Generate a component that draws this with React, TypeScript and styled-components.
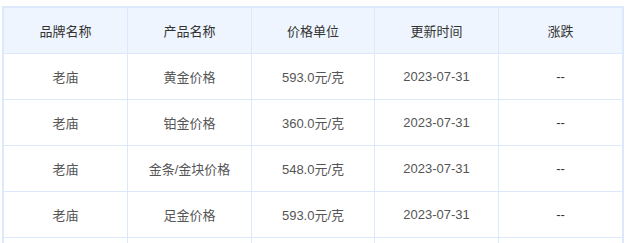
import styled, { createGlobalStyle } from 'styled-components';

const GlobalStyle = createGlobalStyle`
  body {
    margin: 0;
    background: #fff;
    font-family: 'Liberation Sans', 'Noto Sans CJK SC', sans-serif;
  }
`;

const PageLayout = styled.div`
  padding: 6px 0 0 2px;
`;

const PriceTable = styled.table`
  border-collapse: separate;
  border-spacing: 0;
  border: 2px solid #dce8fb;
  table-layout: fixed;
  width: 620px;
  font-size: 13px;
`;

const HeadCell = styled.th<{ $w: number }>`
  width: ${(p) => p.$w}px;
  height: 45px;
  padding: 0;
  background-color: #eef5fe;
  color: #333;
  font-weight: 400;
  text-align: center;
  border-right: 1px solid #dce8fb;
  border-bottom: 1px solid #dce8fb;

  &:last-child {
    border-right: none;
  }
`;

const Cell = styled.td<{ $dark?: boolean }>`
  height: 45px;
  padding: 0;
  color: ${(p) => (p.$dark ? '#333' : '#555')};
  text-align: center;
  border-right: 1px solid #dce8fb;
  border-bottom: 1px solid #dce8fb;

  &:last-child {
    border-right: none;
  }
`;

const columns = [
  { title: '品牌名称', w: 123 },
  { title: '产品名称', w: 123 },
  { title: '价格单位', w: 122 },
  { title: '更新时间', w: 123 },
  { title: '涨跌', w: 123 },
];

const rows = [
  { brand: '老庙', name: '黄金价格', price: '593.0元/克', date: '2023-07-31' },
  { brand: '老庙', name: '铂金价格', price: '360.0元/克', date: '2023-07-31' },
  { brand: '老庙', name: '金条/金块价格', price: '548.0元/克', date: '2023-07-31' },
  { brand: '老庙', name: '足金价格', price: '593.0元/克', date: '2023-07-31' },
];

export default function App() {
  return (
    <PageLayout>
      <GlobalStyle />
      <PriceTable>
        <thead>
          <tr>
            {columns.map((c) => (
              <HeadCell key={c.title} $w={c.w}>
                {c.title}
              </HeadCell>
            ))}
          </tr>
        </thead>
        <tbody>
          {rows.map((r, i) => (
            <tr key={i}>
              <Cell>{r.brand}</Cell>
              <Cell>{r.name}</Cell>
              <Cell>{r.price}</Cell>
              <Cell>{r.date}</Cell>
              <Cell $dark>--</Cell>
            </tr>
          ))}
          {/* next row starts just above the bottom edge, only its borders show */}
          <tr>
            {columns.map((c) => (
              <Cell key={c.title} />
            ))}
          </tr>
        </tbody>
      </PriceTable>
    </PageLayout>
  );
}
